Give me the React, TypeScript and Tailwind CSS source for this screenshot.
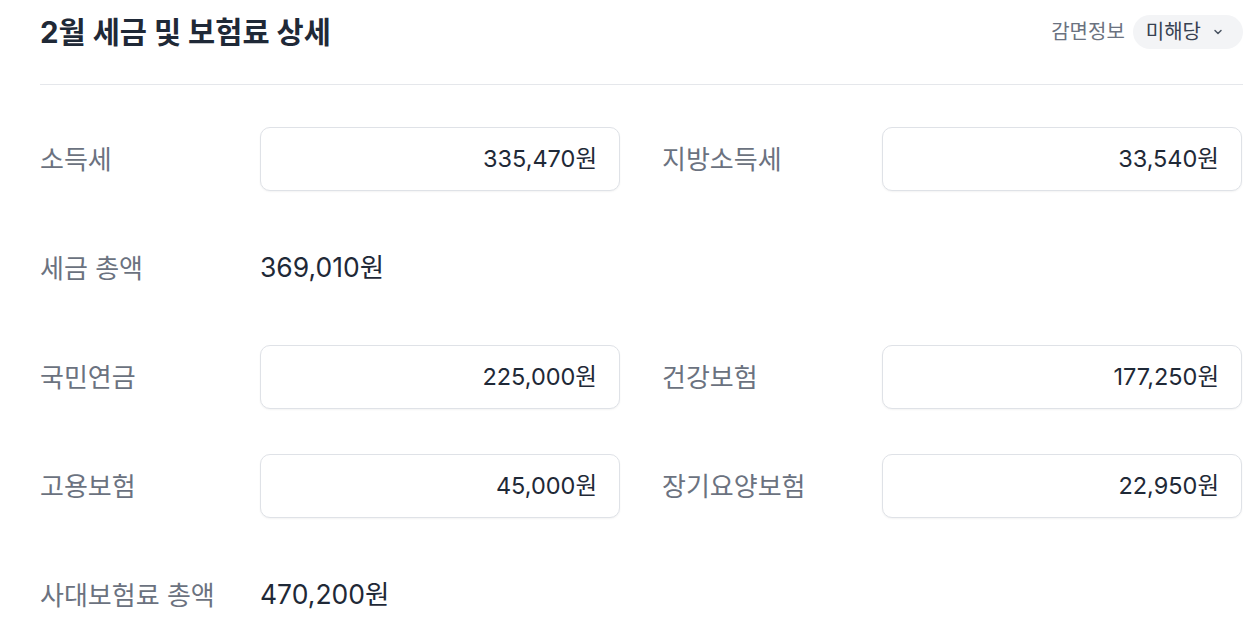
import React from "react";

const font = { fontFamily: '"Inter", "Noto Sans CJK KR", sans-serif' };

function Field({ label, value }: { label: string; value: string }) {
  return (
    <div className="flex items-center">
      <div className="w-[220px] shrink-0 text-[26px] text-[#6b7280]">{label}</div>
      <div className="flex h-[64px] w-[360px] items-center justify-end rounded-[10px] border border-[#dfe2e7] bg-white pr-[22px] text-[23.5px] text-[#1f2937] shadow-[0_1px_2px_rgba(0,0,0,0.05)]">
        {value}
      </div>
    </div>
  );
}

function Row({ children }: { children: React.ReactNode }) {
  return <div className="flex h-[64px] items-center gap-[42px]">{children}</div>;
}

function Total({ label, value }: { label: string; value: string }) {
  return (
    <div className="flex h-[64px] items-center">
      <div className="w-[220px] shrink-0 text-[26px] text-[#6b7280]">{label}</div>
      <div className="text-[26.5px] text-[#1f2937]">{value}</div>
    </div>
  );
}

export default function App() {
  return (
    <div className="min-h-screen bg-white pl-10 pr-[15px]" style={font}>
      <div className="flex h-[64px] items-center justify-between">
        <h1 className="text-[29.5px] font-bold text-[#1f2937]">2월 세금 및 보험료 상세</h1>
        <div className="flex items-center gap-[8px]">
          <span className="text-[20px] text-[#6b7280]">감면정보</span>
          <button className="flex h-[34px] items-center gap-[12px] rounded-full bg-[#f3f4f6] pl-[13px] pr-[20px] text-[20px] text-[#374151]">
            미해당
            <svg width="10" height="10" viewBox="0 0 10 10" fill="none" stroke="#4b5563" strokeWidth="1.5" strokeLinecap="round" strokeLinejoin="round">
              <path d="M2 3.5 L5 6.5 L8 3.5" />
            </svg>
          </button>
        </div>
      </div>
      <div className="mt-[20px] border-t border-[#e5e7eb]" />
      <div className="flex flex-col gap-[45px] pt-[42px]">
        <Row>
          <Field label="소득세" value="335,470원" />
          <Field label="지방소득세" value="33,540원" />
        </Row>
        <Total label="세금 총액" value="369,010원" />
        <Row>
          <Field label="국민연금" value="225,000원" />
          <Field label="건강보험" value="177,250원" />
        </Row>
        <Row>
          <Field label="고용보험" value="45,000원" />
          <Field label="장기요양보험" value="22,950원" />
        </Row>
        <Total label="사대보험료 총액" value="470,200원" />
      </div>
    </div>
  );
}
